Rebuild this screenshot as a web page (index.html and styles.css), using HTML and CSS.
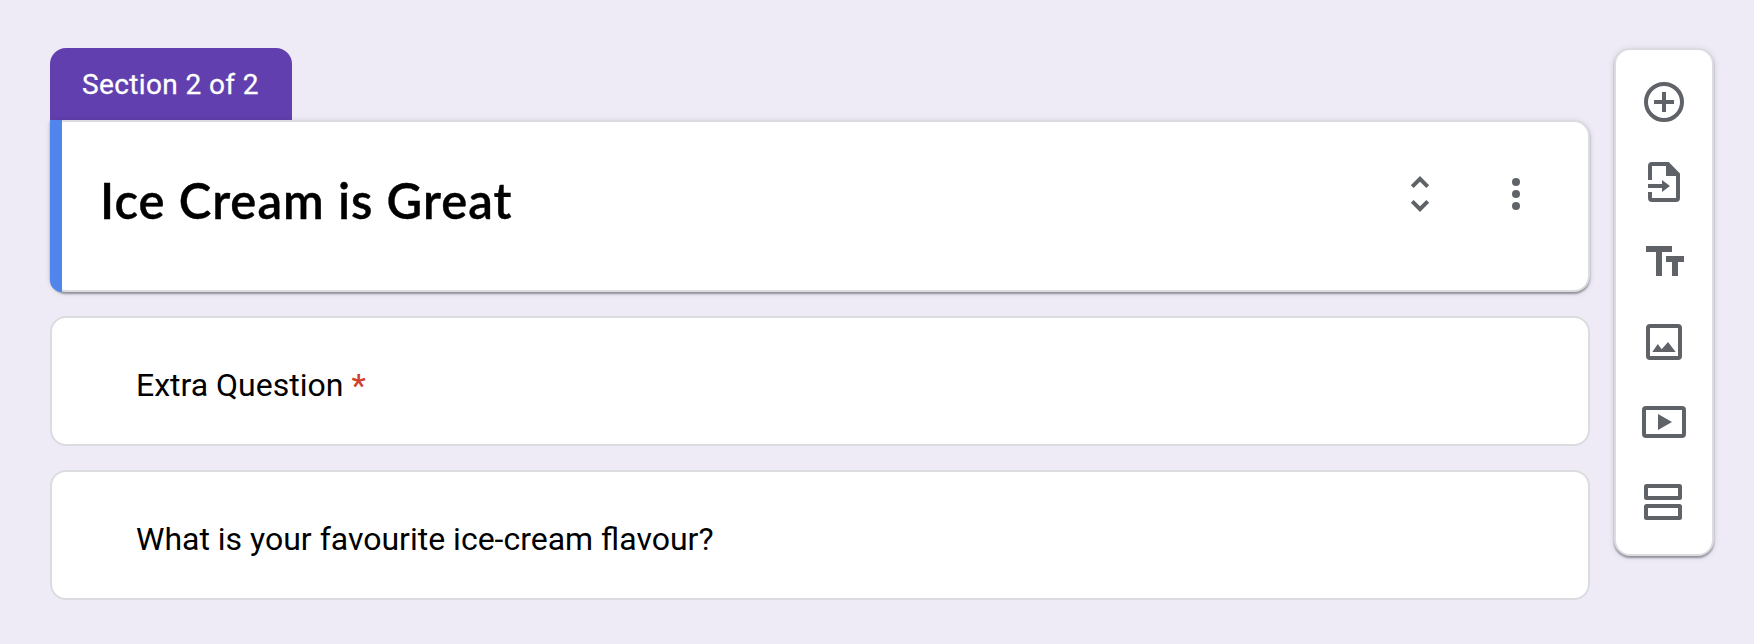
FILE: index.html
```html
<!DOCTYPE html>
<html lang="en">
<head>
<meta charset="utf-8">
<title>Form editor</title>
<link rel="stylesheet" href="styles.css">
</head>
<body>
<main class="editor">
  <div class="form">
    <section class="section">
      <div class="section-tab"><span class="tab-label">Section 2 of 2</span></div>
      <header class="card section-header">
        <h1 class="title">Ice Cream is Great</h1>
        <div class="actions">
          <svg class="icon" viewBox="0 0 24 24"><path d="M12 5.83 15.17 9l1.41-1.41L12 3 7.41 7.59 8.83 9zM12 18.17 8.83 15l-1.42 1.41L12 21l4.58-4.59L15.17 15z"/></svg>
          <svg class="icon" viewBox="0 0 24 24"><circle cx="12" cy="6" r="2"/><circle cx="12" cy="12" r="2"/><circle cx="12" cy="18" r="2"/></svg>
        </div>
      </header>
    </section>
    <article class="card question"><span class="question-text">Extra Question</span><span class="required">*</span></article>
    <article class="card question"><span class="question-text">What is your favourite ice-cream flavour?</span></article>
  </div>
  <nav class="toolbar">
    <svg class="icon" viewBox="0 0 48 48"><circle class="line" cx="24" cy="24" r="18"/><path d="M22 14h4v8h8v4h-8v8h-4v-8h-8v-4h8z"/></svg>
    <svg class="icon" viewBox="0 0 48 48"><path d="M12 4h16.7L40 15.5V40a4 4 0 0 1-4 4H12a4 4 0 0 1-4-4v-6h4v6h24V18H26V8H12v14H8V8a4 4 0 0 1 4-4z"/><path d="M8 26h14v-4l8 6-8 6v-4H8z"/></svg>
    <svg class="icon" viewBox="0 0 48 48"><path d="M6 8h26v6H22v24h-6V14H6zM26 18h18v6h-6v14h-6V24h-6z"/></svg>
    <svg class="icon" viewBox="0 0 48 48"><rect class="line" x="8" y="8" width="32" height="32" rx="2"/><path d="m12.3 34 5.5-8 3.9 5.2L28 24l7.7 10z"/></svg>
    <svg class="icon" viewBox="0 0 48 48"><rect class="line" x="4" y="10" width="40" height="28" rx="2"/><path d="m18 16 14 8-14 8z"/></svg>
    <svg class="icon" viewBox="0 0 48 48"><rect class="line" x="6" y="8" width="34" height="12" rx=".5"/><rect class="line" x="6" y="28" width="34" height="12" rx=".5"/></svg>
  </nav>
</main>
</body>
</html>
```
FILE: styles.css
```css
* { box-sizing: border-box; }
body {
  margin: 0;
  background: #eeebf7;
  color: #000;
  font-family: Roboto, sans-serif;
}
.editor {
  display: flex;
  align-items: flex-start;
  gap: 24px;
  height: 644px;
  padding: 48px 40px 0 50px;
}
.form {
  display: flex;
  flex-direction: column;
  gap: 24px;
  width: 1540px;
}
.card {
  background: #fff;
  border: 2px solid #dadce0;
  border-radius: 16px;
}
.section-tab {
  display: flex;
  align-items: center;
  width: 242px;
  height: 72px;
  padding: 1px 0 0 32px;
  border-radius: 16px 16px 0 0;
  background: #613fae;
  color: #fff;
}
.tab-label {
  font-size: 28px;
  line-height: 40px;
  letter-spacing: .38px;
  -webkit-text-stroke: .3px #fff;
}
.section-header {
  position: relative;
  display: flex;
  justify-content: space-between;
  align-items: flex-start;
  height: 172px;
  padding: 48px 48px 0;
  border-radius: 0 16px 16px 16px;
  box-shadow: 0 2px 2px rgba(0,0,0,.34), 0 1px 6px rgba(0,0,0,.12);
}
/* Selection stripe over the card's left edge */
.section-header::before {
  content: "";
  position: absolute;
  top: -2px;
  bottom: -2px;
  left: -2px;
  width: 12px;
  border-bottom-left-radius: 14px;
  background: #5086ec;
}
.title {
  margin: -2px 0 0;
  font: 600 49px/64px Lato, sans-serif;
  letter-spacing: 1px;
  -webkit-text-stroke: .4px #000;
  white-space: nowrap;
}
.actions { display: flex; gap: 48px; }
.icon { display: block; width: 48px; height: 48px; fill: #5f6368; }
.line { fill: none; stroke: #5f6368; stroke-width: 4; }
.question {
  display: flex;
  gap: 8px;
  height: 130px;
  padding: 43px 84px 0;
  font-size: 32px;
  line-height: 48px;
}
.required { color: #d0402f; font-weight: 500; }
.toolbar {
  display: flex;
  flex-direction: column;
  align-items: center;
  gap: 32px;
  width: 100px;
  height: 508px;
  padding: 28px 0;
  background: #fff;
  border: 2px solid #dadce0;
  border-radius: 16px;
  box-shadow: 0 2px 2px rgba(0,0,0,.34), 0 1px 6px rgba(0,0,0,.12);
}
```
